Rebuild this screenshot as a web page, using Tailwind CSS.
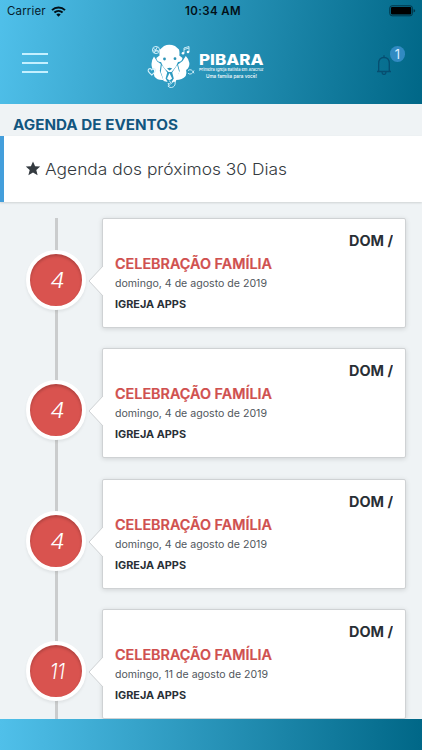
<!DOCTYPE html>
<html lang="pt-BR">
<head>
<meta charset="utf-8">
<title>PIBARA</title>
<script src="https://cdn.jsdelivr.net/npm/@tailwindcss/browser@4"></script>
</head>
<body class="w-[422px] h-[750px] overflow-hidden bg-[#eff3f5] font-['Inter',sans-serif] flex flex-col">
<header class="h-[104px] shrink-0 bg-linear-[98deg] from-[#50c0ea] to-[#006787]">
  <div class="h-[23px] pt-[1px] pl-[7px] pr-[6px] flex items-center justify-between text-[11px] text-[#06202c]">
    <div class="flex items-center gap-[5px] w-[90px]"><span class="text-[11.5px] tracking-[0.15px]">Carrier</span>
      <svg class="-mt-[2px]" width="15" height="11" viewBox="0 0 15 11" fill="none" stroke="#021018" stroke-width="2"><path d="M1 4.100C4.600.6 10.400.6 14 4.100M3.400 6.600c2.400-2.200 5.800-2.200 8.200 0"/><path d="M5.300 8.400c1.200-1.100 3.200-1.100 4.400 0L7.500 10.700z" fill="#021018" stroke="none"/></svg>
    </div>
    <span class="font-semibold text-[11.5px] tracking-[0.4px] ml-[3px] text-[#021018]">10:34 AM</span>
    <div class="w-[90px] flex justify-end -mt-[2px]"><svg width="27" height="12" viewBox="0 0 27 12"><rect x=".8" y=".8" width="22.600" height="10" rx="2.300" fill="none" stroke="#013447"/><rect x="2" y="2" width="20.200" height="7.600" rx="1" fill="#000"/><path d="M24.600 4v3.600q1.600-.6 1.600-1.800T24.600 4" fill="#013447"/></svg></div>
  </div>
  <div class="h-[80px] flex items-center justify-between pl-[22px] pr-[28px]">
    <div class="w-[26px] flex flex-col gap-[7px]"><i class="h-[2px] bg-[#c4f0ff]"></i><i class="h-[2px] bg-[#c4f0ff]"></i><i class="h-[2px] bg-[#c4f0ff]"></i></div>
    <svg class="mt-[8px] mr-[13px]" width="118" height="46" viewBox="146 44 118 46">
      <g fill="#fff">
        <path d="M163 46q5-2.500 11 0l4 3.500q.8 3 .3 6l3.200 2.500q-.5 4-4.500 4-1.500 4-4 7l-2.500 3h-3L164 69q-2.500-3-4-7-4 .2-4.700-4l3.300-2.500q-.5-3 .4-6z"/>
        <path d="M153 56.500l3.200 5 3.600 2.500-1 7 3.600 9q-6 .5-9-3.500-.8-3-.3-6-2.600-2-2.600-6.500 0-4 2.500-7.500z"/>
        <path d="M184.800 56l-3.200 5-4.600 3.500 1.700 6.500-4.500 9q7 .2 10.500-4 1.200-3 .4-6 3.600-2.500 3.300-7-.5-4-3.600-7z"/>
        <path d="M160.800 65q3 4.200 5.400 7.500l-1.600 6 2 3.500-4-1q-1.200-5-2.800-9zM176.200 65q-2.800 4.200-5 7.500l1.600 6-2.200 3.500h4l3.600-10zM168.500 73l2.600 5.500-2.600 2-2.500-2z"/>
      </g>
      <g fill="#2b93b7"><circle cx="163.500" cy="59" r="1.400"/><circle cx="174" cy="58.700" r="1.400"/><path d="M166 68.500q2.600-1.500 5.200 0l-2.600 2z"/></g>
      <g fill="none" stroke="#d8f3fc" stroke-width=".9">
        <circle cx="155" cy="50" r="3.600"/><path d="M152.300 48.500l5.500 3M156.300 47l-3 6M151.800 51h6"/>
        <path d="M183 53v-5l5-1.500v5.500M183 49.500l5-1.500"/>
        <path d="M150.800 75c-4-3-4.300-4.800-3-6.100q2-1 3 .9q1-1.900 3-.9c1.300 1.300 1 3.100-3 6.100z" stroke-width="1.100"/>
        <path d="M187 70.500q3.500-2.500 6 2.800M187 73.300q3.500 2.500 6-2.800"/>
        <path d="M167 83.500q2.500 1.500 4.500-1l1.500-1.300 1.200.8q.3 5-3.800 5.500-2.500.2-3.500-1.500h1.500zM170 83l-1.500-2"/>
      </g>
      <g fill="#fff"><circle cx="182" cy="53.200" r="1.300"/><circle cx="187" cy="52" r="1.300"/></g>
      <g fill="#fff" font-family="Inter, sans-serif">
        <text x="198" y="65.200" font-size="14.500" font-weight="800" textLength="64.500" lengthAdjust="spacingAndGlyphs">PIBARA</text>
        <text x="198" y="71" font-size="3.800" font-weight="500" textLength="64.500" lengthAdjust="spacingAndGlyphs">Primeira Igreja Batista em Aracruz</text>
        <text x="205" y="78" font-size="5" font-weight="500" textLength="51" lengthAdjust="spacingAndGlyphs">Uma família para você!</text>
      </g>
    </svg>
    <div class="relative w-[18px] h-[20px] mt-[4px]">
      <svg width="18" height="20" viewBox="0 0 18 20" fill="none" stroke="#064e70" stroke-width="1.300"><path d="M1 16.500h14M2.700 16.500v-8q0-6 5.300-6t5.300 6v8M8 .3v2M6 17q.2 2.500 2 2.500t2-2.500"/></svg>
      <span class="absolute left-[14px] -top-[9px] w-[15px] h-[16px] rounded-full bg-[#318ac2] text-[#d9efff] text-[13px] leading-[16px] text-center">1</span>
    </div>
  </div>
</header>
<main class="h-[615px] shrink-0 overflow-hidden">
  <h1 class="h-[32px] pl-[13px] pt-[10px] text-[14px] leading-[20px] font-bold whitespace-nowrap"><svg class="block" width="166" height="20"><text x="0" y="15.800" fill="#12567f" textLength="165" lengthAdjust="spacingAndGlyphs">AGENDA DE EVENTOS</text></svg></h1>
  <section class="h-[66px] bg-white border-l-[4px] border-[#439edb] shadow-[0_1px_2px_#0002] flex items-center pl-[21px] gap-[4px]">
    <svg class="-mt-[2px]" width="16" height="15" viewBox="0 0 16 15"><path d="M8 .5l2.100 4.700 5.100.4-3.900 3.500 1.300 5.200L8 11.500l-4.600 2.800 1.300-5.200L.8 5.600 5.900 5.200z" fill="#343a40"/></svg>
    <svg class="-mt-[1px]" width="244" height="24"><text x="0" y="17.600" font-size="16.500" font-weight="300" fill="#343a40" textLength="242" lengthAdjust="spacingAndGlyphs">Agenda dos próximos 30 Dias</text></svg>
  </section>
  <section id="timeline" class="mt-[16px] relative h-[600px] before:content-[''] before:absolute before:left-[55px] before:top-0 before:w-[3px] before:h-full before:bg-[#cacccd]"></section>
</main>
<footer class="h-[31px] shrink-0 bg-linear-[92deg] from-[#50c0ea] to-[#006787]"></footer>
<template id="event">
  <article class="h-[130.330px] flex items-start relative">
    <div class="mt-[32px] ml-[26px] w-[60px] h-[60px] shrink-0 rounded-full border-4 border-white bg-[#d9534f] shadow-[0_2px_3px_#0001,inset_0_2px_3px_#0003] flex items-center justify-center"><svg class="day" width="24" height="28"><text fill="#fff" font-style="italic" font-weight="300" lengthAdjust="spacingAndGlyphs"></text></svg></div>
    <div class="relative ml-[16px] w-[304px] h-[110px] shrink-0 bg-white border border-[#cfd2d4] rounded-[2px] shadow-[0_1px_5px_#0002] pl-[12px] pr-[12px]">
      <svg class="absolute -left-[15px] top-[46px]" width="16" height="32" viewBox="0 0 16 32"><path d="M15 1L1 16l14 15h1V1z" fill="#fff"/><path d="M15 1L1 16l14 15" fill="none" stroke="#cfd2d4"/></svg>
      <div class="h-[34px] pt-[12px] flex justify-end"><svg width="44" height="20"><text x="0" y="15" font-size="14" font-weight="700" fill="#292f36" textLength="44" lengthAdjust="spacingAndGlyphs">DOM /</text></svg></div>
      <svg class="block" width="160" height="20"><text x="0" y="15.500" font-size="14" font-weight="600" stroke-width=".2" stroke="#d0504e" fill="#d0504e" textLength="157" lengthAdjust="spacingAndGlyphs">CELEBRAÇÃO FAMÍLIA</text></svg>
      <svg class="block" width="160" height="20"><text class="date" x="0" y="13.500" font-size="10.500" fill="#50565c" lengthAdjust="spacingAndGlyphs"></text></svg>
      <svg class="block" width="80" height="20"><text x="0" y="15" font-size="10.300" font-weight="700" fill="#292f36" textLength="71" lengthAdjust="spacingAndGlyphs">IGREJA APPS</text></svg>
    </div>
  </article>
</template>
<script>
const timeline = document.getElementById('timeline');
for (const day of [4, 4, 4, 11]) {
  const node = document.getElementById('event').content.cloneNode(true);
  const number = node.querySelector('.day text');
  number.textContent = day;
  number.setAttribute('x', 6);
  number.setAttribute('y', 22);
  number.setAttribute('font-size', day === 4 ? 21 : 22);
  number.setAttribute('textLength', 15);
  const date = node.querySelector('.date');
  date.textContent = `domingo, ${day} de agosto de 2019`;
  date.setAttribute('textLength', day === 4 ? 152 : 153);
  timeline.append(node);
}
</script>
</body>
</html>
